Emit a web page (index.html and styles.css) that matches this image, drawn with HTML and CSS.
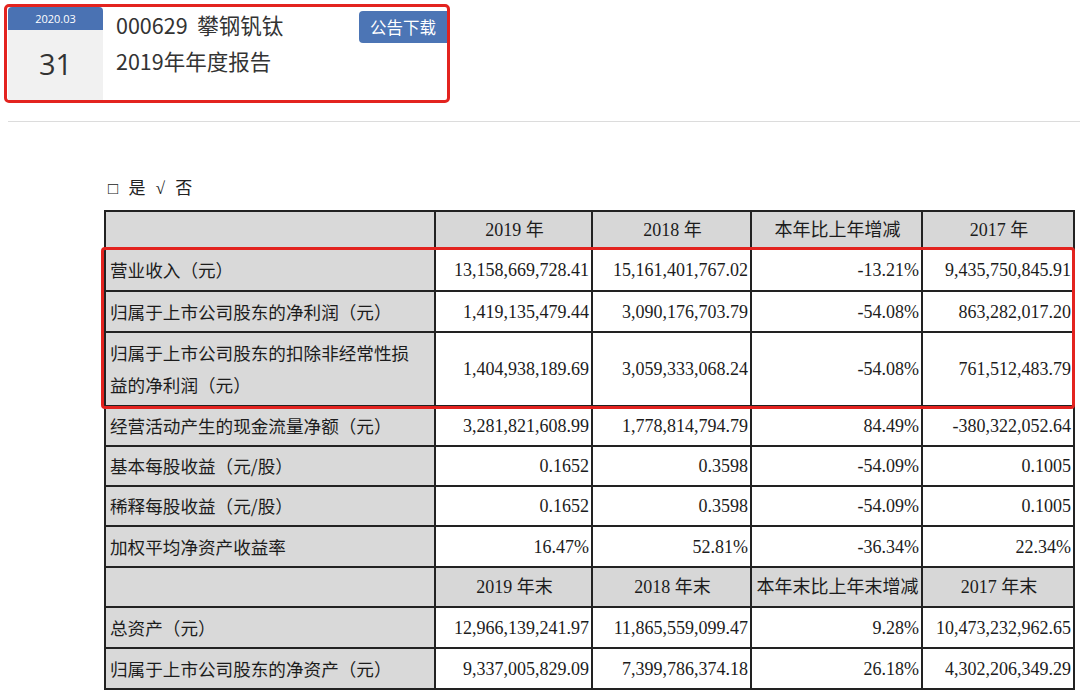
FILE: index.html
```html
<!DOCTYPE html>
<html lang="zh-CN">
<head>
<meta charset="utf-8">
<title>000629 攀钢钒钛 2019年年度报告</title>
<link rel="stylesheet" href="styles.css">
</head>
<body>
<div class="card">
  <div class="date">
    <div class="date-month">2020.03</div>
    <div class="date-day">31</div>
  </div>
  <div class="title">
    <div class="title-line">000629&nbsp;&nbsp;攀钢钒钛</div>
    <div class="title-line">2019年年度报告</div>
  </div>
  <div class="btn">公告下载</div>
</div>
<div class="sep"></div>
<div class="doc">
  <div class="choice">□ 是 √ 否</div>
  <div class="table-wrap">
    <table class="fin">
      <colgroup>
        <col class="c-label"><col class="c-a"><col class="c-b"><col class="c-c"><col class="c-d">
      </colgroup>
      <tr class="head h38">
        <td class="label"></td><td>2019 年</td><td>2018 年</td><td>本年比上年增减</td><td>2017 年</td>
      </tr>
      <tr class="h42">
        <td class="label">营业收入（元）</td><td class="num">13,158,669,728.41</td><td class="num">15,161,401,767.02</td><td class="num">-13.21%</td><td class="num">9,435,750,845.91</td>
      </tr>
      <tr class="h41">
        <td class="label">归属于上市公司股东的净利润（元）</td><td class="num">1,419,135,479.44</td><td class="num">3,090,176,703.79</td><td class="num">-54.08%</td><td class="num">863,282,017.20</td>
      </tr>
      <tr class="h74">
        <td class="label two">归属于上市公司股东的扣除非经常性损<br>益的净利润（元）</td><td class="num">1,404,938,189.69</td><td class="num">3,059,333,068.24</td><td class="num">-54.08%</td><td class="num">761,512,483.79</td>
      </tr>
      <tr class="h40">
        <td class="label">经营活动产生的现金流量净额（元）</td><td class="num">3,281,821,608.99</td><td class="num">1,778,814,794.79</td><td class="num">84.49%</td><td class="num">-380,322,052.64</td>
      </tr>
      <tr class="h40">
        <td class="label">基本每股收益（元/股）</td><td class="num">0.1652</td><td class="num">0.3598</td><td class="num">-54.09%</td><td class="num">0.1005</td>
      </tr>
      <tr class="h40">
        <td class="label">稀释每股收益（元/股）</td><td class="num">0.1652</td><td class="num">0.3598</td><td class="num">-54.09%</td><td class="num">0.1005</td>
      </tr>
      <tr class="h41">
        <td class="label">加权平均净资产收益率</td><td class="num">16.47%</td><td class="num">52.81%</td><td class="num">-36.34%</td><td class="num">22.34%</td>
      </tr>
      <tr class="head h40">
        <td class="label"></td><td>2019 年末</td><td>2018 年末</td><td>本年末比上年末增减</td><td>2017 年末</td>
      </tr>
      <tr class="h41">
        <td class="label">总资产（元）</td><td class="num">12,966,139,241.97</td><td class="num">11,865,559,099.47</td><td class="num">9.28%</td><td class="num">10,473,232,962.65</td>
      </tr>
      <tr class="h41">
        <td class="label">归属于上市公司股东的净资产（元）</td><td class="num">9,337,005,829.09</td><td class="num">7,399,786,374.18</td><td class="num">26.18%</td><td class="num">4,302,206,349.29</td>
      </tr>
    </table>
    <div class="highlight"></div>
  </div>
</div>
</body>
</html>
```
FILE: styles.css
```css
html, body {
  margin: 0;
  padding: 0;
  background: #ffffff;
}
body {
  font-family: "Noto Sans CJK SC", "Noto Sans", sans-serif;
  color: #333;
  width: 1080px;
  height: 693px;
  overflow: hidden;
}
.card {
  margin: 4px 0 0 4px;
  width: 439px;
  height: 93px;
  border: 3px solid #e3231f;
  border-radius: 5px;
  display: flex;
  align-items: flex-start;
  padding-left: 1px;
  box-sizing: content-box;
}
.date {
  width: 95px;
  height: 93px;
  background: #f1f1f1;
  display: flex;
  flex-direction: column;
  border-radius: 4px 4px 0 0;
  overflow: hidden;
}
.date-month {
  height: 23px;
  background: #4a72b3;
  color: #fff;
  font-family: "Open Sans", "Noto Sans", sans-serif;
  font-size: 11px;
  line-height: 23px;
  text-align: center;
}
.date-day {
  flex: 1;
  display: flex;
  align-items: center;
  justify-content: center;
  font-family: "Open Sans", "Noto Sans", sans-serif;
  font-size: 29px;
  color: #333;
  padding-bottom: 4px;
}
.title {
  flex: 1;
  margin-left: 13px;
  margin-top: -1px;
}
.title-line {
  font-size: 21.5px;
  line-height: 38px;
  color: #333;
  white-space: nowrap;
}
.title-line + .title-line {
  margin-top: -2px;
}
.btn {
  margin-top: 4px;
  width: 88px;
  height: 32px;
  background: #4c75b5;
  color: #fff;
  font-size: 16.5px;
  line-height: 32px;
  text-align: center;
  border-radius: 4px 0 0 4px;
}
.sep {
  margin: 18px 0 0 8px;
  height: 1px;
  background: #dcdcdc;
}
.doc {
  padding-left: 104px;
  padding-top: 55px;
}
.choice {
  font-family: "Liberation Serif", "Noto Sans CJK SC", serif;
  font-size: 17px;
  line-height: 24px;
  padding-left: 4px;
  color: #222;
  word-spacing: 6px;
  height: 24px;
  margin-bottom: 9px;
}
.table-wrap {
  position: relative;
  width: 969px;
}
.fin {
  border-collapse: collapse;
  table-layout: fixed;
  width: 969px;
  font-family: "Liberation Serif", "Noto Sans CJK SC", serif;
  font-size: 18px;
  color: #1c1c1c;
}
.c-label { width: 330px; }
.c-a { width: 157px; }
.c-b { width: 159px; }
.c-c { width: 171px; }
.c-d { width: 152px; }
.fin td {
  border: 2px solid #222;
  padding: 0 2px 0 4px;
  white-space: nowrap;
  text-align: center;
  line-height: 24px;
}
.fin .head td {
  background: #d7d7d7;
}
.fin td.label {
  background: #d9d9d9;
  text-align: left;
  font-family: "Noto Sans CJK SC", sans-serif;
  font-size: 17.6px;
}
.fin td.two {
  line-height: 32px;
}
.fin td.num {
  text-align: right;
  padding-right: 2px;
}
.h38 { height: 38px; }
.h40 { height: 40px; }
.h41 { height: 41px; }
.h42 { height: 42px; }
.h74 { height: 74px; }
.highlight {
  position: absolute;
  left: -3px;
  top: 37px;
  width: 968px;
  height: 156px;
  border: 3px solid #e3231f;
  border-radius: 4px;
  pointer-events: none;
}
```
